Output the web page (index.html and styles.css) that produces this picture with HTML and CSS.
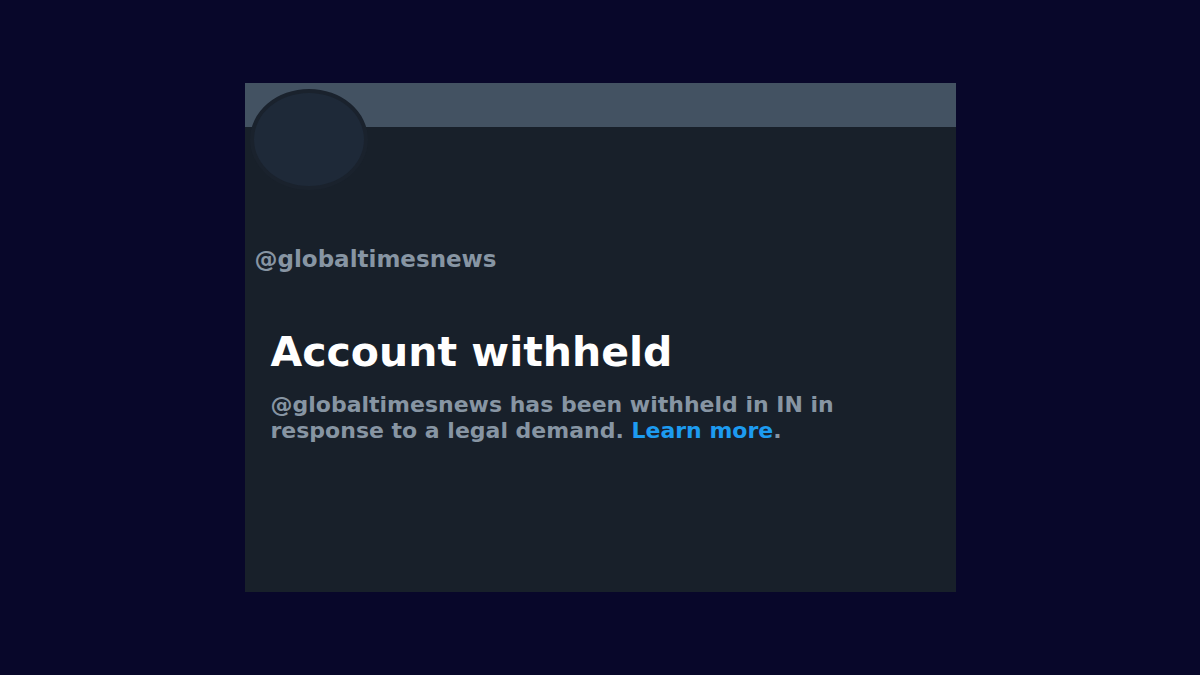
FILE: index.html
```html
<!DOCTYPE html>
<html lang="en">
<head>
<meta charset="utf-8">
<link rel="stylesheet" href="styles.css">
<title>Account withheld</title>
</head>
<body>
<div class="card">
  <div class="banner"></div>
  <div class="avatar"></div>
  <div class="handle">@globaltimesnews</div>
  <div class="notice">
    <h1 class="title">Account withheld</h1>
    <p class="desc">@globaltimesnews has been withheld in IN in<br>response to a legal demand. <a class="link" href="#">Learn more</a>.</p>
  </div>
</div>
</body>
</html>
```
FILE: styles.css
```css
html, body {
  margin: 0;
  padding: 0;
  height: 100%;
}
body {
  background: #08072a;
  display: flex;
  align-items: center;
  justify-content: center;
  font-family: "DejaVu Sans", "Open Sans", sans-serif;
}
.card {
  position: relative;
  width: 711px;
  height: 509px;
  background: #18202a;
  display: flex;
  flex-direction: column;
}
.banner {
  height: 44px;
  background: #435262;
  flex: none;
}
.avatar {
  position: absolute;
  left: 5px;
  top: 6px;
  width: 110px;
  height: 93px;
  border-radius: 50%;
  background: #1e2938;
  border: 4px solid #1a222d;
}
.handle {
  margin-top: 118px;
  padding-left: 10px;
  color: #8795a3;
  font-size: 23px;
  font-weight: 700;
  line-height: 28px;
}
.notice {
  padding-left: 26px;
  margin-top: 55px;
}
.title {
  margin: 0;
  color: #ffffff;
  font-size: 41px;
  font-weight: 700;
  line-height: 48px;
}
.desc {
  margin: 16px 0 0;
  color: #8795a3;
  font-size: 22px;
  font-weight: 700;
  line-height: 26px;
}
.link {
  color: #1d9bf0;
  text-decoration: none;
}
```
